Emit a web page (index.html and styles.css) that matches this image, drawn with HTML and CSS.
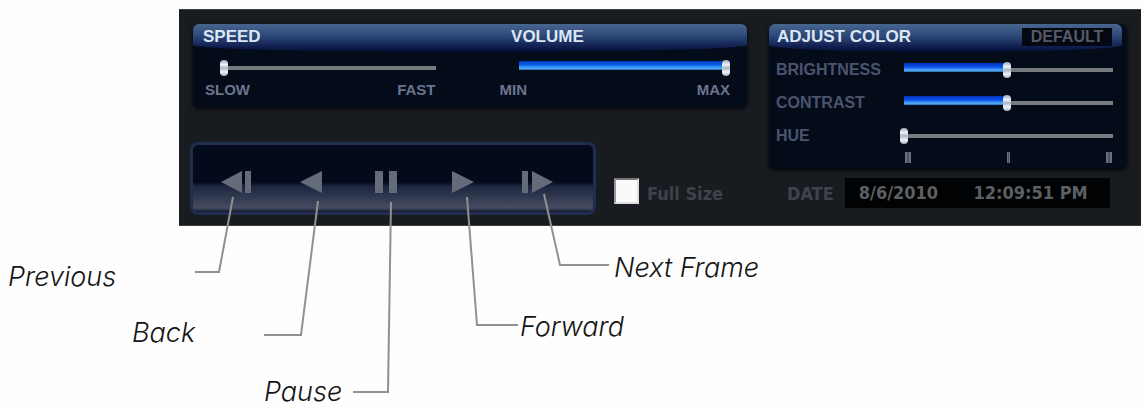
FILE: index.html
```
<!DOCTYPE html>
<html lang="en">
<head>
<title>Player Controls</title>
<meta charset="utf-8">
<meta name="viewport" content="width=device-width, initial-scale=1.0">
<link rel="stylesheet" href="styles.css">
</head>
<body>
<div class="diagram">
<form class="player">
	<div class="left">
		<div class="panel levels">
			<div class="panel_head levels_head">
				<label for="speed">SPEED</label>
				<label for="volume">VOLUME</label>
			</div>
			<div class="levels_body">
				<div class="level">
					<input type="range" class="slider empty" id="speed" min="0" max="100" value="0">
					<div class="ends"><span>SLOW</span><span>FAST</span></div>
				</div>
				<div class="level">
					<input type="range" class="slider full" id="volume" min="0" max="100" value="100">
					<div class="ends"><span>MIN</span><span>MAX</span></div>
				</div>
			</div>
		</div>
		<div class="bottom">
			<div class="transport">
				<button type="button" aria-label="Previous"><svg width="32" height="24" viewBox="0 0 32 24"><path d="M0 12L21 1V23ZM24 1H30V23H24Z"/></svg></button>
				<button type="button" aria-label="Back"><svg width="24" height="24" viewBox="0 0 24 24"><path d="M0 12L22 1V23Z"/></svg></button>
				<button type="button" aria-label="Pause"><svg width="24" height="24" viewBox="0 0 24 24"><path d="M0 1H8V23H0ZM14 1H22V23H14Z"/></svg></button>
				<button type="button" aria-label="Forward"><svg width="24" height="24" viewBox="0 0 24 24"><path d="M2 1L24 12L2 23Z"/></svg></button>
				<button type="button" aria-label="Next Frame"><svg width="32" height="24" viewBox="0 0 32 24"><path d="M1 1H7V23H1ZM11 1L32 12L11 23Z"/></svg></button>
			</div>
			<div class="fullsize">
				<input type="checkbox" id="fullsize">
				<label for="fullsize">Full Size</label>
			</div>
		</div>
	</div>
	<div class="right">
		<div class="panel color">
			<div class="panel_head color_head">
				<span>ADJUST COLOR</span>
				<button type="button" class="default">DEFAULT</button>
			</div>
			<div class="color_body">
				<label for="brightness">BRIGHTNESS</label>
				<input type="range" class="slider half" id="brightness" min="0" max="100" value="50">
				<label for="contrast">CONTRAST</label>
				<input type="range" class="slider half" id="contrast" min="0" max="100" value="50">
				<label for="hue">HUE</label>
				<input type="range" class="slider empty" id="hue" min="0" max="100" value="0">
				<div class="ticks"><i></i><i class="mid"></i><i></i></div>
			</div>
		</div>
		<div class="date">
			<span>DATE</span>
			<div class="clock"><span>8/6/2010</span><span>12:09:51 PM</span></div>
		</div>
	</div>
</form>
<!-- callout lines from the buttons to their names -->
<svg class="lines" width="800" height="409" viewBox="0 0 800 409">
	<path d="M233 197L219 272H195"/>
	<path d="M318 201L301 335H264"/>
	<path d="M391 202L388 392H353"/>
	<path d="M467 197L477 325H518"/>
	<path d="M544 194L560 265H609"/>
</svg>
<span class="note previous">Previous</span>
<span class="note back">Back</span>
<span class="note pause">Pause</span>
<span class="note forward">Forward</span>
<span class="note next">Next Frame</span>
</div>
</body>
</html>
```
FILE: styles.css
```
*{box-sizing:border-box;}
body{margin:0;background:#fefefe;font-family:"Liberation Sans",Arial,sans-serif;}
button,input{margin:0;padding:0;font-family:inherit;}
.diagram{position:relative;min-height:409px;padding:9px 1px 0 179px;}
.player{display:flex;gap:22px;padding:14px 14px 10px;background:#181b20;border:1px solid #3c3d40;border-width:1px 0;}
.left{flex:1;display:flex;flex-direction:column;justify-content:space-between;}
.right{width:358px;padding-bottom:7px;}

.panel{background:#040c1a;border-radius:6px;box-shadow:0 2px 4px #02050b;}
.panel_head{height:28px;padding:3px 10px 5px;align-items:center;color:#dde6f5;font-size:17px;font-weight:bold;line-height:20px;background:linear-gradient(#47668f,#2b4676 45%,#0d1a4a 85%,#060f30);border-radius:6px 6px 50% 50% / 6px 6px 7px 7px;}
.levels_head{display:grid;grid-template-columns:15fr 11fr;}
.levels_body{display:grid;grid-template-columns:1fr 1fr;gap:64px;padding:6px 17px 8px 12px;}
.level{display:flex;flex-direction:column;gap:4px;padding-top:1px;}
.level .slider{margin-left:15px;}
.ends{display:flex;justify-content:space-between;color:#6d748f;font-size:15px;font-weight:bold;line-height:18px;}

.slider{-webkit-appearance:none;appearance:none;height:18px;background:none;}
.slider::-webkit-slider-runnable-track{height:18px;background:linear-gradient(#777b80,#777b80) 4px 7px / 100% 4px no-repeat;}
.slider.full::-webkit-slider-runnable-track{background:linear-gradient(#0434b8,#0866f0 45%,#58b0f8 80%,#2568b0) 4px 2px / 100% 9px no-repeat;}
.slider.half::-webkit-slider-runnable-track{background:linear-gradient(#0434b8,#0850e8 45%,#58b0f8 80%,#2568b0) 4px 2px / 50% 9px no-repeat,linear-gradient(#777b80,#777b80) 4px 7px / 100% 4px no-repeat;}
.slider::-webkit-slider-thumb{-webkit-appearance:none;width:8px;height:16px;margin-top:1px;border-radius:4px;background:linear-gradient(#9dacba,#eef4fa 30%,#a9b5c0 50%,#f2f6fa 75%,#a5b0bc);}

.bottom{display:flex;align-items:flex-end;gap:18px;margin-left:-3px;}
.transport{display:flex;width:406px;height:73px;padding:0 6px;border:3px solid #212d4e;border-radius:8px;background:linear-gradient(#020a1c,#020a1c 55%,#1e2740 62%,#464d61 94%,#10182c);}
.transport button{width:75px;padding-top:6px;border:0;background:none;}
.transport svg{display:block;margin:auto;fill:#646b79;}
.fullsize{display:flex;align-items:center;gap:8px;height:26px;margin-bottom:11px;color:#40424a;font:bold 18px "DejaVu Sans Condensed","DejaVu Sans",sans-serif;}
.fullsize input{-webkit-appearance:none;appearance:none;width:25px;height:26px;background:#fafafa;border:2px solid #aaa;border-color:#777 #ddd #ddd #999;}
.fullsize label{padding-top:4px;}

.color{height:144px;}
.color_head{display:flex;justify-content:space-between;margin-right:5px;padding-left:8px;}
.default{width:90px;height:18px;border:0;background:#050812;color:#555a68;font-size:16px;font-weight:bold;line-height:18px;}
.color_body{display:grid;grid-template-columns:124px 1fr;grid-auto-rows:33px;align-items:center;padding:1px 14px 0 7px;color:#4b546d;font-size:16px;font-weight:bold;}
.color_body .slider{width:100%;}
.ticks{grid-column:2;align-self:start;display:flex;justify-content:space-between;padding:0 1px 0 5px;}
.ticks i{width:6px;height:11px;border:solid #687080;border-width:0 2px;background:#4b5363;}
.ticks .mid{width:3px;border-width:0 1px;}
.date{display:flex;align-items:center;gap:11px;margin-top:10px;padding-left:18px;color:#3f424d;font:bold 18px "DejaVu Sans Condensed","DejaVu Sans",sans-serif;}
.clock{display:flex;justify-content:space-between;width:265px;height:30px;padding:0 22px 0 14px;background:#010203;color:#5d6063;line-height:30px;}

.lines{position:absolute;left:0;top:0;fill:none;stroke:#919191;stroke-width:2;pointer-events:none;}
.note{position:absolute;color:#151515;font:italic 300 27px/32px Inter,cursive;white-space:nowrap;}
.previous{left:8px;top:261px;}
.back{left:132px;top:317px;}
.pause{left:264px;top:376px;}
.forward{left:520px;top:311px;}
.next{left:614px;top:252px;}
```
